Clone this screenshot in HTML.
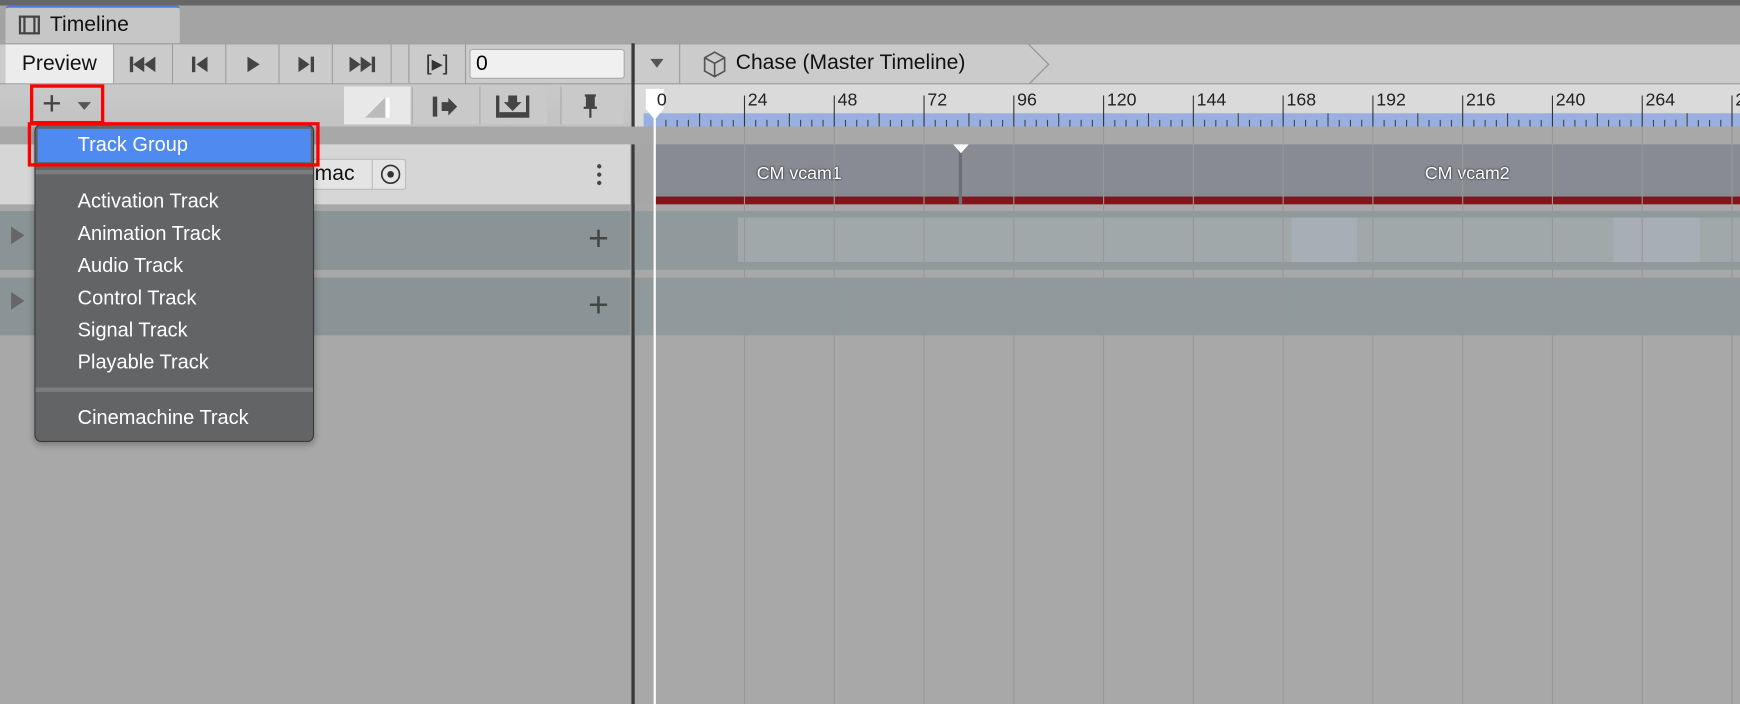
<!DOCTYPE html>
<html><head><meta charset="utf-8"><style>
html,body{margin:0;padding:0;width:1740px;height:704px;overflow:hidden;background:#a5a5a5}
#w{position:absolute;left:0;top:0;width:1568px;height:634px;transform:scale(1.10969,1.11041);transform-origin:0 0;font-family:"Liberation Sans",sans-serif;background:#a8a8a8;overflow:hidden}
.a{position:absolute}
.btn{position:absolute;top:40px;height:35px;background:#cbcbcb;border-right:1px solid #9a9a9a;display:flex;align-items:center;justify-content:center;color:#333;font-size:14px}
.num{position:absolute;top:82px;font-size:16px;color:#222}
.mi{position:absolute;left:38px;color:#fff;font-size:18px}
</style></head><body><div id="w">
<div class="a" style="left:0;top:0;width:1568px;height:5px;background:#666"></div>
<div class="a" style="left:0;top:5px;width:1568px;height:34px;background:#a4a4a4"></div>
<div class="a" style="left:5px;top:5px;width:157px;height:34px;background:#c6c6c6;border-top:2px solid #4c7de0;box-sizing:border-box;border-radius:3px 3px 0 0"></div>
<svg class="a" style="left:16px;top:13px" width="22" height="20"><rect x="2" y="2" width="17" height="15" fill="none" stroke="#444" stroke-width="2"/><line x1="6" y1="2" x2="6" y2="17" stroke="#444" stroke-width="2"/><line x1="15" y1="2" x2="15" y2="17" stroke="#444" stroke-width="2"/></svg>
<div class="a" style="left:45px;top:12px;font-size:19px;color:#111">Timeline</div>
<div class="a" style="left:0;top:39px;width:1568px;height:37px;background:#cbcbcb;border-top:1px solid #999;border-bottom:1px solid #999;box-sizing:border-box"></div>
<div class="btn" style="left:5px;width:97px;background:#ececec;font-size:19px;color:#111">Preview</div>
<div class="btn" style="left:103px;width:52px"><svg width="26" height="16"><rect x="1" y="1" width="3" height="14" fill="#444"/><path d="M14 1 L4 8 L14 15Z M24 1 L14 8 L24 15Z" fill="#444"/></svg></div>
<div class="btn" style="left:156px;width:47px"><svg width="16" height="16"><rect x="1" y="1" width="3" height="14" fill="#444"/><path d="M15 1 L5 8 L15 15Z" fill="#444"/></svg></div>
<div class="btn" style="left:204px;width:47px"><svg width="14" height="16"><path d="M2 1 L13 8 L2 15Z" fill="#444"/></svg></div>
<div class="btn" style="left:252px;width:47px"><svg width="16" height="16"><rect x="12" y="1" width="3" height="14" fill="#444"/><path d="M1 1 L11 8 L1 15Z" fill="#444"/></svg></div>
<div class="btn" style="left:300px;width:52px"><svg width="26" height="16"><rect x="22" y="1" width="3" height="14" fill="#444"/><path d="M2 1 L12 8 L2 15Z M12 1 L22 8 L12 15Z" fill="#444"/></svg></div>
<div class="btn" style="left:353px;width:15px"></div>
<div class="btn" style="left:369px;width:50px;font-size:19px">[<span style="font-size:13px">▶</span>]</div>
<div class="a" style="left:423px;top:44px;width:140px;height:27px;background:#f0f0f0;border:1px solid #aaa;border-radius:3px;font-size:19px;padding-left:5px;box-sizing:border-box;line-height:26px">0</div>
<div class="a" style="left:569px;top:39px;width:3px;height:595px;background:#3a3a3a"></div>
<div class="a" style="left:586px;top:53px;width:0;height:0;border-left:6px solid transparent;border-right:6px solid transparent;border-top:8px solid #555"></div>
<div class="a" style="left:612px;top:40px;width:1px;height:35px;background:#999"></div>
<svg class="a" style="left:632px;top:45px" width="24" height="26"><path d="M12 2 L21 7 L21 19 L12 24 L3 19 L3 7 Z M3 7 L12 12 L21 7 M12 12 L12 24" fill="none" stroke="#555" stroke-width="1.5"/></svg>
<div class="a" style="left:663px;top:46px;font-size:19px;color:#111">Chase (Master Timeline)</div>
<svg class="a" style="left:925px;top:40px" width="25" height="36"><path d="M2 0 L20 18 L2 36" fill="none" stroke="#999" stroke-width="1.2"/></svg>
<div class="a" style="left:0;top:76px;width:569px;height:38px;background:linear-gradient(#c9c9c9,#c2c2c2)"></div>
<div class="a" style="left:38px;top:79px;font-size:30px;color:#444;line-height:30px">+</div>
<div class="a" style="left:70px;top:92px;border-left:6px solid transparent;border-right:6px solid transparent;border-top:7px solid #555;width:0;height:0"></div>
<div class="a" style="left:27px;top:76px;width:67px;height:36px;border:3px solid #f00;box-sizing:border-box"></div>
<div class="a" style="left:310px;top:78px;width:60px;height:34px;background:#e8e8e8"></div>
<svg class="a" style="left:325px;top:84px" width="30" height="24"><path d="M4 22 L22 4 L22 22 Z" fill="#bbb"/><rect x="23" y="4" width="3" height="18" fill="#fff"/></svg>
<div class="a" style="left:371px;top:78px;width:60px;height:34px;background:#c9c9c9;border-left:1px solid #aaa"></div>
<svg class="a" style="left:386px;top:85px" width="30" height="22"><rect x="4" y="2" width="4" height="18" fill="#444"/><path d="M12 7 L18 7 L18 3 L26 11 L18 19 L18 15 L12 15Z" fill="#444"/></svg>
<div class="a" style="left:432px;top:78px;width:60px;height:34px;background:#c9c9c9;border-left:1px solid #aaa"></div>
<svg class="a" style="left:445px;top:84px" width="34" height="24"><rect x="2" y="2" width="3" height="20" fill="#444"/><rect x="29" y="2" width="3" height="20" fill="#444"/><rect x="5" y="17" width="24" height="5" fill="#444"/><path d="M13 2 L21 2 L21 8 L25 8 L17 16 L9 8 L13 8Z" fill="#444"/></svg>
<div class="a" style="left:505px;top:78px;width:56px;height:34px;background:#c9c9c9;border-left:1px solid #aaa"></div>
<svg class="a" style="left:522px;top:84px" width="20" height="24"><path d="M5 2 H15 M10 2 V22 M4 13 H16 M7 4 H13 V13 H7 Z" stroke="#444" stroke-width="2" fill="#444"/></svg>
<div class="a" style="left:572px;top:76px;width:996px;height:38px;background:#dadada"></div>
<div class="a" style="left:580px;top:102px;width:988px;height:12px;background:#98afe0"></div>
<svg class="a" style="left:572px;top:76px" width="996" height="38" id="rul"></svg>
<div class="a" style="left:0;top:114px;width:1568px;height:16px;background:#a8a8a8"></div>
<div class="a" style="left:0;top:130px;width:568px;height:54px;background:#d6d6d6"></div>
<div class="a" style="left:270px;top:143px;width:96px;height:28px;background:#e4e4e4;border:1px solid #bbb;border-radius:3px;box-sizing:border-box;font-size:19px;line-height:26px;color:#111;padding-left:2px">emac</div>
<div class="a" style="left:335px;top:144px;width:1px;height:26px;background:#bbb"></div>
<svg class="a" style="left:341px;top:146px" width="22" height="22"><circle cx="11" cy="11" r="8" fill="none" stroke="#333" stroke-width="1.5"/><circle cx="11" cy="11" r="3" fill="#333"/></svg>
<div class="a" style="left:538px;top:146px;width:4px;height:22px;background:radial-gradient(circle,#444 1.8px,transparent 2px) 0 0/4px 7.5px"></div>
<div class="a" style="left:0;top:190px;width:568px;height:53px;background:#8a9496"></div>
<div class="a" style="left:0;top:250px;width:568px;height:52px;background:#8a9496"></div>
<div class="a" style="left:530px;top:198px;font-size:32px;color:#444;line-height:32px">+</div>
<div class="a" style="left:530px;top:258px;font-size:32px;color:#444;line-height:32px">+</div>
<div class="a" style="left:10px;top:204px;border-top:8px solid transparent;border-bottom:8px solid transparent;border-left:12px solid #666"></div>
<div class="a" style="left:10px;top:263px;border-top:8px solid transparent;border-bottom:8px solid transparent;border-left:12px solid #666"></div>
<div class="a" style="left:572px;top:130px;width:996px;height:54px;background:#a6a6a6"></div>
<div class="a" style="left:590px;top:130px;width:978px;height:47px;background:#888b94"></div>
<div class="a" style="left:590px;top:177px;width:978px;height:7px;background:#7f161c"></div>
<div class="a" style="left:864px;top:135px;width:3px;height:49px;background:#6d6f75"></div>
<div class="a" style="left:859px;top:130px;border-left:7px solid transparent;border-right:7px solid transparent;border-top:8px solid #fff"></div>
<div class="a" style="left:682px;top:148px;font-size:16px;color:#fff;text-shadow:0 0 2px #000">CM vcam1</div>
<div class="a" style="left:1284px;top:148px;font-size:16px;color:#fff;text-shadow:0 0 2px #000">CM vcam2</div>
<div class="a" style="left:572px;top:190px;width:996px;height:53px;background:#909a9c"></div>
<div class="a" style="left:665px;top:196px;width:903px;height:40px;background:#a0a8aa"></div>
<div class="a" style="left:1164px;top:196px;width:59px;height:40px;background:#a8aeb5"></div>
<div class="a" style="left:1454px;top:196px;width:78px;height:40px;background:#a8aeb5"></div>
<div class="a" style="left:572px;top:250px;width:996px;height:52px;background:#909a9c"></div>
<svg class="a" style="left:572px;top:114px" width="996" height="520" id="grid"></svg>
<div class="a" style="left:589px;top:100px;width:2px;height:534px;background:#fff"></div>
<svg class="a" style="left:580px;top:78px" width="20" height="32"><path d="M2 2 H18 V20 L10 30 L2 20Z" fill="#fff"/></svg>
<div class="num" style="left:592px">0</div>
<div class="a" style="left:31px;top:112px;width:252px;height:286px;background:#626465;border:1px solid #3a3a3a;border-radius:6px;box-sizing:border-box;box-shadow:0 2px 6px rgba(0,0,0,.3)">
<div class="a" style="left:2px;top:3px;width:246px;height:30px;background:#4f8af0"></div>
<div class="mi" style="top:7px">Track Group</div>
<div class="a" style="left:0;top:40px;width:250px;height:4px;background:#7a7c7d"></div>
<div class="mi" style="top:58px">Activation Track</div>
<div class="mi" style="top:87px">Animation Track</div>
<div class="mi" style="top:116px">Audio Track</div>
<div class="mi" style="top:145px">Control Track</div>
<div class="mi" style="top:174px">Signal Track</div>
<div class="mi" style="top:203px">Playable Track</div>
<div class="a" style="left:0;top:236px;width:250px;height:4px;background:#7a7c7d"></div>
<div class="mi" style="top:253px">Cinemachine Track</div>
</div>
<div class="a" style="left:25px;top:110px;width:263px;height:40px;border:3px solid #f00;box-sizing:border-box"></div>
<div id="nums"></div>
</div>
<script>
var r=document.getElementById('rul'),g=document.getElementById('grid'),n=document.getElementById('nums'),s='',gs='',ns='';
var sp=80.9,x0=18;
for(var k=0;k<13;k++){var x=x0+k*sp;
 for(var q=1;q<8;q++){var xx=x+q*sp/8;var h=q==4?12:6;s+='<line x1="'+xx+'" x2="'+xx+'" y1="'+(38-h)+'" y2="38" stroke="#444" stroke-width="1"/>';}
 if(k>0){s+='<line x1="'+x+'" x2="'+x+'" y1="10" y2="38" stroke="#333" stroke-width="1"/>';
 gs+='<line x1="'+x+'" x2="'+x+'" y1="0" y2="520" stroke="#979797" stroke-width="1"/>';
 ns+='<div class="num" style="left:'+(572+x+3)+'px">'+(k*24)+'</div>';}}
r.innerHTML=s;g.innerHTML=gs;n.innerHTML=ns;
</script>
</body></html>
